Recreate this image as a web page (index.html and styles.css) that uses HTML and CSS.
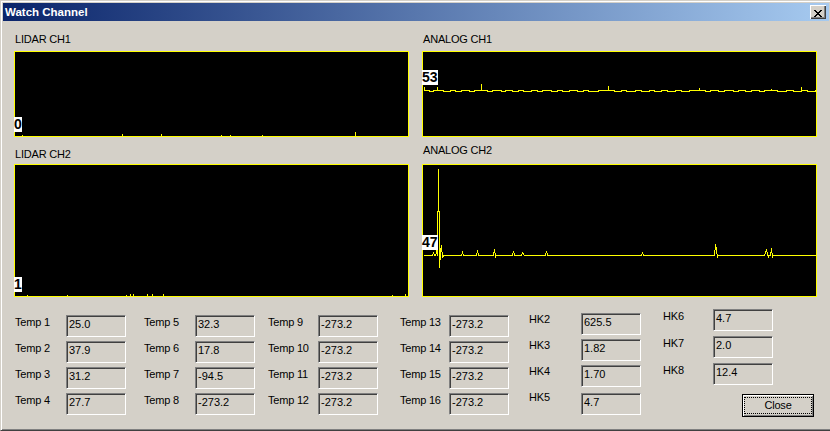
FILE: index.html
```html
<!DOCTYPE html>
<html lang="en">
<head>
<meta charset="utf-8">
<title>Watch Channel</title>
<link rel="stylesheet" href="styles.css">
</head>
<body>
<div class="window">
  <div class="titlebar">
    <span class="title">Watch Channel</span>
    <button class="cap-btn" aria-label="Close window">
      <svg width="8" height="7" viewBox="0 0 8 7"><path d="M0 0h2v1H0z M6 0h2v1H6z M1 1h2v1H1z M5 1h2v1H5z M2 2h4v1H2z M3 3h2v1H3z M2 4h4v1H2z M1 5h2v1H1z M5 5h2v1H5z M0 6h2v1H0z M6 6h2v1H6z" fill="#000"/></svg>
    </button>
  </div>
  <div class="client">
    <div class="charts">
      <div class="chart-col">
        <div class="chart-label">LIDAR CH1</div>
        <div class="chart short">
          <svg class="trace" width="393" height="84" viewBox="0 0 393 84" shape-rendering="crispEdges">
            <g fill="#ffff00">
              <rect x="7" y="83" width="1" height="1"/>
              <rect x="107" y="82" width="1" height="2"/>
              <rect x="146" y="82" width="1" height="2"/>
              <rect x="206" y="83" width="1" height="1"/>
              <rect x="215" y="83" width="1" height="1"/>
              <rect x="247" y="83" width="1" height="1"/>
              <rect x="340" y="80" width="1" height="4"/>
            </g>
          </svg>
          <span class="val val-l1">0</span>
        </div>
        <div class="chart-label second">LIDAR CH2</div>
        <div class="chart tall">
          <svg class="trace" width="393" height="131" viewBox="0 0 393 131" shape-rendering="crispEdges">
            <g fill="#ffff00">
              <rect x="12" y="130" width="1" height="1"/>
              <rect x="52" y="130" width="1" height="1"/>
              <rect x="111" y="130" width="1" height="1"/>
              <rect x="115" y="129" width="1" height="2"/>
              <rect x="118" y="129" width="1" height="2"/>
              <rect x="132" y="129" width="1" height="2"/>
              <rect x="137" y="129" width="1" height="2"/>
              <rect x="148" y="129" width="1" height="2"/>
              <rect x="377" y="130" width="1" height="1"/>
              <rect x="390" y="129" width="1" height="2"/>
            </g>
          </svg>
          <span class="val val-l2">1</span>
        </div>
      </div>
      <div class="chart-col">
        <div class="chart-label">ANALOG CH1</div>
        <div class="chart short">
          <svg class="trace" width="393" height="84" viewBox="0 0 393 84" shape-rendering="crispEdges">
            <path fill="none" stroke="#ffff00" stroke-width="1" d="M0.5 38.5 h1 v-4 v4 h5 v1 h4 v-1 h4 v-4 v4 h6 v1 h7 v-1 h5 v1 h6 v-1 h8 v1 h5 v-1 h7 v-7 v7 h6 v1 h5 v-1 h9 v1 h4 v-1 h7 v1 h6 v-1 h5 v1 h8 v-1 h6 v1 h5 v-1 h9 v1 h6 v-1 h5 v1 h7 v-1 h8 v1 h6 v-1 h5 v1 h10 v-1 h10 v-5 v5 h6 v1 h7 v-1 h5 v1 h9 v-1 h6 v1 h8 v-1 h5 v1 h7 v-1 h6 v1 h8 v-1 h6 v1 h8 v-1 h10 v-3 v3 h6 v1 h5 v-1 h8 v1 h6 v-1 h9 v1 h5 v-1 h7 v1 h6 v-1 h8 v1 h5 v-1 h7 v-2 v2 h6 v1 h9 v-1 h7 v1 h8 v-1 v-4 v4 h6 v1 h8 v-1 h1"/>
          </svg>
          <span class="val val-a1">53</span>
        </div>
        <div class="chart-label second up">ANALOG CH2</div>
        <div class="chart tall">
          <svg class="trace" width="393" height="131" viewBox="0 0 393 131" shape-rendering="crispEdges">
            <polyline fill="none" stroke="#ffff00" stroke-width="1" transform="translate(0.5 0)" points="0,90.5 9,90.5 10,88 11,90.5 12,90.5 13,87 14,90.5 15,4 15,46 16,46 16,103 17,87 18,80 19,93 20,90.5 38,90.5 39,87.5 40,90.5 53,90.5 54,85 55,90.5 70,90.5 71,84 72,92 73,90.5 89,90.5 90,86 91,90.5 98,90.5 99,87.5 100,89 101,90.5 122,90.5 123,86 124,90.5 218,90.5 219,88 220,90.5 291,90.5 292,79 293,85 294,92 295,90.5 341,90.5 342,88 343,84 344,89 345,92 346,90.5 347,90.5 348,83 349,92 350,90.5 393,90.5"/>
          </svg>
          <span class="val val-a2">47</span>
        </div>
      </div>
    </div>

    <div class="fields">
      <div class="col c1">
        <span class="flabel">Temp 1</span><span class="field">25.0</span>
        <span class="flabel">Temp 2</span><span class="field">37.9</span>
        <span class="flabel">Temp 3</span><span class="field">31.2</span>
        <span class="flabel">Temp 4</span><span class="field">27.7</span>
      </div>
      <div class="col c2">
        <span class="flabel">Temp 5</span><span class="field">32.3</span>
        <span class="flabel">Temp 6</span><span class="field">17.8</span>
        <span class="flabel">Temp 7</span><span class="field">-94.5</span>
        <span class="flabel">Temp 8</span><span class="field">-273.2</span>
      </div>
      <div class="col c3">
        <span class="flabel">Temp 9</span><span class="field">-273.2</span>
        <span class="flabel">Temp 10</span><span class="field">-273.2</span>
        <span class="flabel">Temp 11</span><span class="field">-273.2</span>
        <span class="flabel">Temp 12</span><span class="field">-273.2</span>
      </div>
      <div class="col c4">
        <span class="flabel">Temp 13</span><span class="field">-273.2</span>
        <span class="flabel">Temp 14</span><span class="field">-273.2</span>
        <span class="flabel">Temp 15</span><span class="field">-273.2</span>
        <span class="flabel">Temp 16</span><span class="field">-273.2</span>
      </div>
      <div class="col c5">
        <span class="flabel">HK2</span><span class="field">625.5</span>
        <span class="flabel">HK3</span><span class="field">1.82</span>
        <span class="flabel">HK4</span><span class="field">1.70</span>
        <span class="flabel">HK5</span><span class="field low">4.7</span>
      </div>
      <div class="last">
        <div class="col c6">
          <span class="flabel">HK6</span><span class="field">4.7</span>
          <span class="flabel">HK7</span><span class="field">2.0</span>
          <span class="flabel">HK8</span><span class="field">12.4</span>
        </div>
        <button class="btn-close"><span class="focus">Close</span></button>
      </div>
    </div>
  </div>
</div>
</body>
</html>
```
FILE: styles.css
```css
* { box-sizing: border-box; }

html, body {
  margin: 0;
  padding: 0;
  overflow: hidden;
  background: #d4d0c8;
}

body {
  font-family: "Liberation Sans", Arial, sans-serif;
  font-size: 11px;
  color: #000;
}

.window {
  width: 832px;
  height: 431px;
  border: 1px solid;
  border-color: #d4d0c8 #404040 #404040 #d4d0c8;
  box-shadow: inset 1px 1px #ffffff, inset -1px -1px #808080;
  padding: 2px;
  background: #d4d0c8;
}

/* title bar */
.titlebar {
  display: flex;
  align-items: flex-start;
  height: 18px;
  padding-left: 2px;
  background: linear-gradient(to right, #0a246a, #a6caf0);
}

.title {
  color: #fff;
  font-weight: bold;
  font-size: 11.5px;
  line-height: 18px;
  white-space: nowrap;
}

.cap-btn {
  appearance: none;
  display: block;
  margin: 2px 3px 0 auto;
  width: 16px;
  height: 14px;
  border: 0;
  padding: 3px 0 0 4px;
  background: #d4d0c8;
  box-shadow: inset 1px 1px #ffffff, inset -1px -1px #404040, inset -2px -2px #808080;
}

.cap-btn svg { display: block; }

/* client */
.client {
  padding: 12px 0 0 11px;
}

.charts {
  display: grid;
  grid-template-columns: 395px 395px;
  column-gap: 13px;
}

.chart-col {
  display: flex;
  flex-direction: column;
}

.chart-label {
  height: 13px;
  line-height: 13px;
  padding-left: 1px;
  margin-bottom: 5px;
  letter-spacing: -0.2px;
  white-space: nowrap;
}

.chart-label.second {
  margin-top: 11px;
  margin-bottom: 3px;
}

.chart-label.second.up {
  margin-top: 7px;
  margin-bottom: 7px;
}

.chart {
  position: relative;
  border: 1px solid #ffff00;
  background: #000;
}

.chart.short { height: 86px; }
.chart.tall { height: 133px; }

.trace { display: block; }

.val {
  position: absolute;
  left: -1px;
  background: #fff;
  color: #000;
  font-weight: bold;
  font-size: 14px;
  line-height: 15px;
  padding: 0;
  letter-spacing: 0;
}

.val-l1 { top: 65px; }
.val-l2 { top: 112px; }
.val-a1 { top: 18px; }
.val-a2 { top: 70px; }

/* fields */
.fields {
  display: flex;
  align-items: flex-start;
  margin-top: 12px;
}

.col {
  display: grid;
  grid-auto-rows: 22px;
  row-gap: 4px;
}

.c1 { grid-template-columns: 51px 60px; margin-left: 1px; margin-top: 6px; }
.c2 { grid-template-columns: 51px 60px; margin-left: 18px; margin-top: 6px; }
.c3 { grid-template-columns: 50px 60px; margin-left: 13px; margin-top: 6px; }
.c4 { grid-template-columns: 49px 60px; margin-left: 22px; margin-top: 6px; }
.c5 { grid-template-columns: 52px 60px; margin-left: 20px; margin-top: 4px; }
.c6 { grid-template-columns: 50px 60px; row-gap: 5px; }

.last {
  display: flex;
  flex-direction: column;
  align-items: flex-start;
  margin-left: 22px;
}

.flabel {
  padding-top: 1px;
  line-height: 13px;
  letter-spacing: -0.2px;
  white-space: nowrap;
}

.c5 .flabel { padding-top: 0; }

.field {
  height: 22px;
  border: 1px solid;
  border-color: #808080 #ffffff #ffffff #808080;
  box-shadow: inset 1px 1px #404040;
  padding: 2px 0 0 2px;
  line-height: 13px;
  background: #d4d0c8;
  white-space: nowrap;
}

.field.low { margin-top: 2px; }

.btn-close {
  appearance: none;
  margin: 9px 0 0 79px;
  width: 72px;
  height: 23px;
  border: 1px solid #000;
  padding: 2px 1px;
  background: #d4d0c8;
  box-shadow: inset 1px 1px #ffffff, inset -1px -1px #808080;
  font-family: "Liberation Sans", Arial, sans-serif;
  font-size: 11px;
  color: #000;
}

.focus {
  display: flex;
  align-items: center;
  justify-content: center;
  height: 100%;
  border: 1px dotted #000;
  line-height: 13px;
  letter-spacing: -0.2px;
}
```
